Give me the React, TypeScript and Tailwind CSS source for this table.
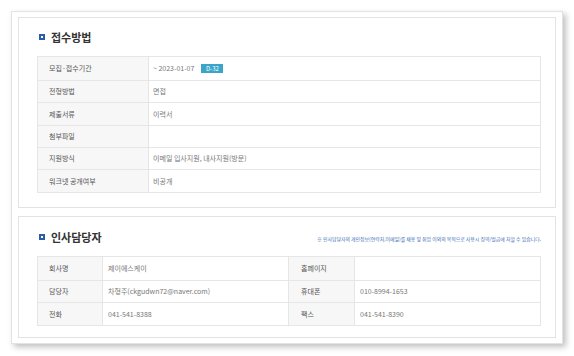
import React from 'react';

const font = { fontFamily: '"Noto Sans CJK KR", "Noto Sans", sans-serif' };

const applyRows: Array<{ label: string; value: React.ReactNode; h: string }> = [
  {
    label: '모집·접수기간',
    value: (
      <span className="flex items-center">
        <span>~ 2023-01-07</span>
        <span className="ml-[7px] inline-flex h-[9px] w-[22px] items-center justify-center bg-[#3aa5c8] text-[6px] leading-none text-white">
          D-32
        </span>
      </span>
    ),
    h: 'h-[23px]',
  },
  { label: '전형방법', value: '면접', h: 'h-[22px]' },
  { label: '제출서류', value: '이력서', h: 'h-[23px]' },
  { label: '첨부파일', value: '', h: 'h-[22px]' },
  { label: '지원방식', value: '이메일 입사지원, 내사지원(방문)', h: 'h-[22px]' },
  { label: '워크넷 공개여부', value: '비공개', h: 'h-[23px]' },
];

const managerRows = [
  { l1: '회사명', v1: '제이에스케이', l2: '홈페이지', v2: '', h: 'h-[23px]' },
  { l1: '담당자', v1: '차형주(ckgudwn72@naver.com)', l2: '휴대폰', v2: '010-8994-1653', h: 'h-[22px]' },
  { l1: '전화', v1: '041-541-8388', l2: '팩스', v2: '041-541-8390', h: 'h-[23px]' },
];

function SectionTitle({ title }: { title: string }) {
  return (
    <div className="flex items-center h-[16px]">
      <span className="ml-[2px] h-[6px] w-[6px] border-[2px] border-[#2b5ea6] bg-white" />
      <span className="ml-[6px] text-[11px] font-bold leading-none text-[#333]">{title}</span>
    </div>
  );
}

export default function App() {
  return (
    <div className="h-[356px] w-[574px] bg-white pl-[11px] pt-[11px]" style={font}>
      <div className="flex w-[552px] flex-col gap-[8px] border border-[#e3e3e3] bg-white px-[6px] pb-[5px] pt-[5px] shadow-[3px_3px_6px_rgba(0,0,0,0.25)]">
        {/* 접수방법 */}
        <div className="h-[191px] border border-[#e3e3e3] pl-[18px] pt-[11px]">
          <SectionTitle title="접수방법" />
          <div className="mt-[11px] w-[504px] border border-[#e6e6e6] text-[7px]">
            {applyRows.map((r, i) => (
              <div key={r.label} className={`flex ${r.h} ${i > 0 ? 'border-t border-[#e6e6e6]' : ''}`}>
                <div className="flex w-[111px] items-center border-r border-[#e6e6e6] bg-[#f7f7f7] pl-[11px] text-[#555]">
                  {r.label}
                </div>
                <div className="flex flex-1 items-center pl-[4px] text-[#777]">{r.value}</div>
              </div>
            ))}
          </div>
        </div>

        {/* 인사담당자 */}
        <div className="h-[122px] border border-[#e3e3e3] pl-[18px] pt-[12px]">
          <div className="flex w-[504px] items-center justify-between">
            <SectionTitle title="인사담당자" />
            <span className="mt-[4px] whitespace-nowrap text-[4.9px] leading-none text-[#3d6db5]">
              ※ 인사담당자의 개인정보(연락처,이메일)를 채용 및 취업 이외의 목적으로 사용시 징역/벌금에 처할 수 있습니다.
            </span>
          </div>
          <div className="mt-[11px] w-[504px] border border-[#e6e6e6] text-[7px]">
            {managerRows.map((r, i) => (
              <div key={r.l1} className={`flex ${r.h} ${i > 0 ? 'border-t border-[#e6e6e6]' : ''}`}>
                <div className="flex w-[65px] items-center border-r border-[#e6e6e6] bg-[#f7f7f7] pl-[11px] text-[#555]">
                  {r.l1}
                </div>
                <div className="flex w-[186px] items-center border-r border-[#e6e6e6] pl-[5px] text-[#777]">
                  {r.v1}
                </div>
                <div className="flex w-[66px] items-center border-r border-[#e6e6e6] bg-[#f7f7f7] pl-[12px] text-[#555]">
                  {r.l2}
                </div>
                <div className="flex flex-1 items-center pl-[5px] text-[#777]">{r.v2}</div>
              </div>
            ))}
          </div>
        </div>
      </div>
    </div>
  );
}
